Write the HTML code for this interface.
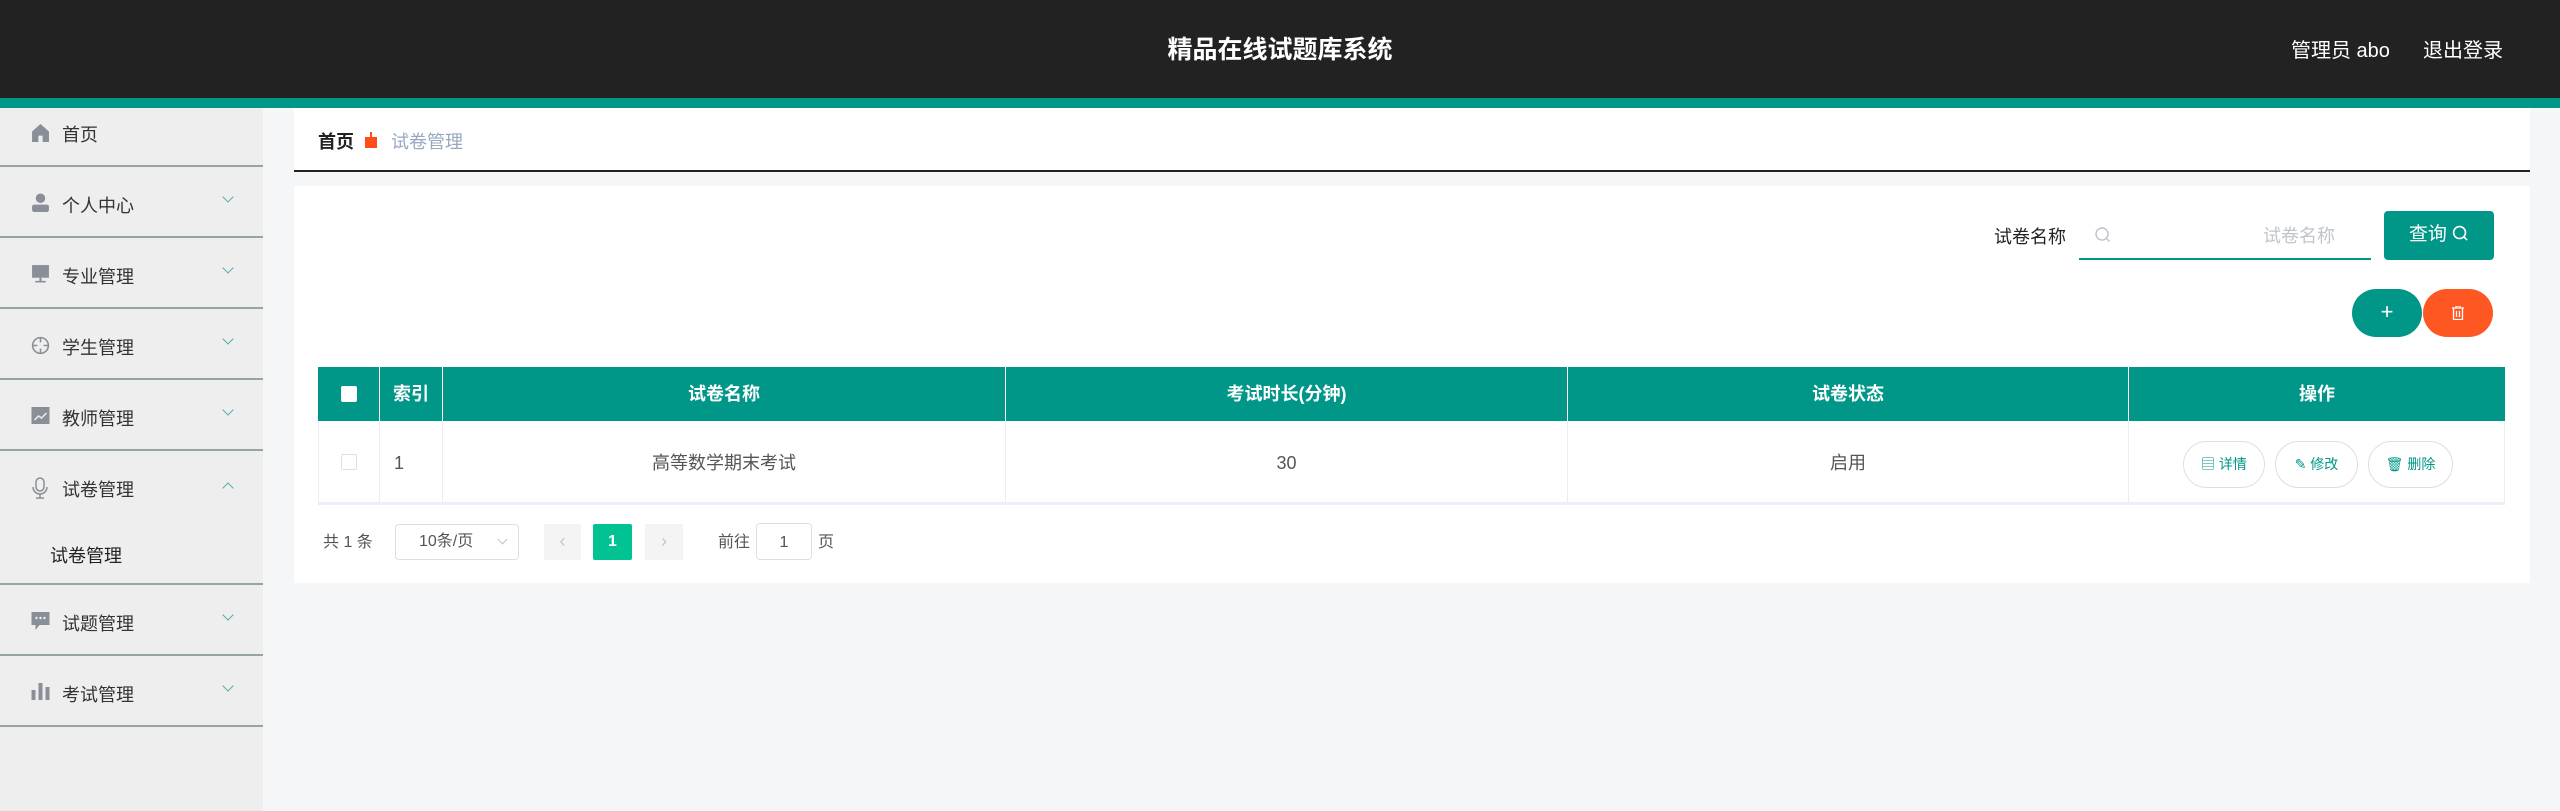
<!DOCTYPE html>
<html><head><meta charset="utf-8"><style>
*{margin:0;padding:0;box-sizing:border-box}
body{width:2560px;height:811px;overflow:hidden;background:#f5f6f8;font-family:"Liberation Sans","Noto Sans CJK SC",sans-serif;position:relative}
.a{position:absolute}
.hdr{left:0;top:0;width:2560px;height:98px;background:#222}
.bar{left:0;top:98px;width:2560px;height:10px;background:#009688}
.side{left:0;top:108px;width:263px;height:703px;background:#eee}
.item{position:absolute;left:0;width:263px;border-bottom:2px solid #97a5a2;font-size:18px;color:#333}
.item span.t{position:absolute;left:62px}
.item .ic{position:absolute;left:31px}
.item .ar{position:absolute;left:224px;width:8px;height:8px;border-right:1px solid #5aa;border-bottom:1px solid #5aa;transform:rotate(45deg)}
.c{text-align:center;color:#fff;font-weight:bold;font-size:18px}
.th{position:absolute;top:367px;height:54px;line-height:54px;background:#009688;border-right:1px solid #fff}
.td{position:absolute;top:421px;height:84px;line-height:84px;background:#fff;border-right:1px solid #ebeef5;border-bottom:3px solid #ebeef5;font-size:18px;color:#555;text-align:center}
.ob{position:absolute;top:441px;height:47px;border:1px solid #dcdfe6;border-radius:24px;background:#fff;color:#009688;font-size:14px;line-height:45px;text-align:center}
</style></head><body>
<div class="a hdr"></div>
<div class="a" style="left:0;top:30px;width:2560px;text-align:center;color:#fff;font-size:25px;font-weight:bold">精品在线试题库系统</div>
<div class="a" style="left:2291px;top:34px;color:#fff;font-size:20px">管理员 abo</div>
<div class="a" style="left:2423px;top:34px;color:#fff;font-size:20px">退出登录</div>
<div class="a bar"></div>
<div class="a side"></div>
<div class="item" style="top:108px;height:59px"><svg class="ic" style="top:15px" width="19" height="19" viewBox="0 0 18 18"><path d="M9 1L1 8v10h6v-6h4v6h6V8z" fill="#8a8e96"/></svg><span class="t" style="top:13px">首页</span></div>
<div class="item" style="top:167px;height:71px"><svg class="ic" style="top:26px" width="19" height="19" viewBox="0 0 18 18"><circle cx="9" cy="5" r="4.5" fill="#8a8e96"/><rect x="1" y="11" width="16" height="7" rx="2" fill="#8a8e96"/></svg><span class="t" style="top:25px">个人中心</span><i class="ar" style="top:26px"></i></div>
<div class="item" style="top:238px;height:71px"><svg class="ic" style="top:26px" width="19" height="19" viewBox="0 0 18 18"><rect x="1" y="1" width="16" height="12" fill="#8a8e96"/><rect x="8" y="13" width="2" height="4" fill="#8a8e96"/><rect x="4" y="16" width="10" height="1.5" fill="#8a8e96"/></svg><span class="t" style="top:25px">专业管理</span><i class="ar" style="top:26px"></i></div>
<div class="item" style="top:309px;height:71px"><svg class="ic" style="top:26px" width="19" height="21" viewBox="0 0 18 20"><circle cx="9" cy="10" r="7.5" fill="none" stroke="#8a8e96" stroke-width="1.5"/><path d="M9 2v5M9 13v5M1 10h5M12 10h5" stroke="#8a8e96" stroke-width="1.5"/></svg><span class="t" style="top:25px">学生管理</span><i class="ar" style="top:26px"></i></div>
<div class="item" style="top:380px;height:71px"><svg class="ic" style="top:27px" width="19" height="18" viewBox="0 0 18 18"><rect width="18" height="17" fill="#8a8e96"/><path d="M3 13l4-4 3 2 5-5" stroke="#eee" stroke-width="1.5" fill="none"/></svg><span class="t" style="top:25px">教师管理</span><i class="ar" style="top:26px"></i></div>
<div class="item" style="top:451px;height:134px"><svg class="ic" style="top:26px" width="18" height="22" viewBox="0 0 18 22"><rect x="5" y="1" width="8" height="13" rx="4" fill="none" stroke="#8a8e96" stroke-width="1.5"/><path d="M2 10a7 7 0 0 0 14 0M9 17v4M5 21h8" fill="none" stroke="#8a8e96" stroke-width="1.5"/></svg><span class="t" style="top:25px">试卷管理</span><i class="ar" style="top:33px;transform:rotate(225deg)"></i><span class="t" style="top:91px;left:50px;color:#222">试卷管理</span></div>
<div class="item" style="top:585px;height:71px"><svg class="ic" style="top:27px" width="19" height="19" viewBox="0 0 18 19"><path d="M0 0h18v13H8l-4 5v-5H0z" fill="#8a8e96"/><circle cx="5" cy="6" r="1.2" fill="#eee"/><circle cx="9" cy="6" r="1.2" fill="#eee"/><circle cx="13" cy="6" r="1.2" fill="#eee"/></svg><span class="t" style="top:25px">试题管理</span><i class="ar" style="top:26px"></i></div>
<div class="item" style="top:656px;height:71px"><svg class="ic" style="top:26px" width="19" height="18" viewBox="0 0 18 18"><rect x="0" y="8" width="4" height="10" fill="#8a8e96"/><rect x="7" y="1" width="4" height="17" fill="#8a8e96"/><rect x="14" y="5" width="4" height="13" fill="#8a8e96"/></svg><span class="t" style="top:25px">考试管理</span><i class="ar" style="top:26px"></i></div>

<div class="a" style="left:294px;top:108px;width:2236px;height:64px;background:#fff;border-bottom:2px solid #222"></div>
<div class="a" style="left:318px;top:128px;font-size:18px;font-weight:bold;color:#222">首页</div>
<svg class="a" style="left:364px;top:132px" width="14" height="16" viewBox="0 0 14 16"><rect x="1" y="5" width="12" height="11" fill="#ff4d1a"/><rect x="6" y="0" width="2" height="6" fill="#ff4d1a"/></svg>
<div class="a" style="left:391px;top:128px;font-size:18px;color:#97a8be">试卷管理</div>

<div class="a" style="left:294px;top:186px;width:2236px;height:397px;background:#fff"></div>
<div class="a" style="left:1994px;top:223px;font-size:18px;color:#222">试卷名称</div>
<div class="a" style="left:2079px;top:210px;width:292px;height:50px;border-bottom:2px solid #009688"></div>
<svg class="a" style="left:2094px;top:226px" width="18" height="18" viewBox="0 0 18 18"><circle cx="8" cy="8" r="6" fill="none" stroke="#c0c4cc" stroke-width="1.5"/><path d="M12.5 12.5l3 3" stroke="#c0c4cc" stroke-width="1.5"/></svg>
<div class="a" style="left:2263px;top:222px;font-size:18px;color:#c0c4cc">试卷名称</div>
<div class="a" style="left:2384px;top:211px;width:110px;height:49px;background:#009688;border-radius:4px;color:#fff;font-size:19px;line-height:47px;text-align:center">查询 <svg width="17" height="17" viewBox="0 0 18 18" style="vertical-align:-2px"><circle cx="8" cy="8" r="6.3" fill="none" stroke="#fff" stroke-width="1.7"/><path d="M12.5 12.5l3.5 3.5" stroke="#fff" stroke-width="1.7"/></svg></div>
<div class="a" style="left:2352px;top:289px;width:70px;height:48px;background:#009688;border-radius:24px;color:#fff;font-size:22px;line-height:46px;text-align:center">+</div>
<div class="a" style="left:2423px;top:289px;width:70px;height:48px;background:#ff5722;border-radius:24px"><svg style="position:absolute;left:29px;top:17px" width="12" height="14" viewBox="0 0 12 14"><path d="M0 2h12M4 2V0h4v2M1.5 2v11.5h9V2M4.5 5v6M7.5 5v6" fill="none" stroke="#fff" stroke-width="1.3"/></svg></div>

<div class="th" style="left:318px;width:62px"><div style="position:absolute;left:23px;top:19px;width:16px;height:16px;background:#fff;border-radius:2px"></div></div>
<div class="th c" style="left:380px;width:63px">索引</div>
<div class="th c" style="left:443px;width:563px">试卷名称</div>
<div class="th c" style="left:1006px;width:562px">考试时长(分钟)</div>
<div class="th c" style="left:1568px;width:561px">试卷状态</div>
<div class="th c" style="left:2129px;width:376px;border-right:none">操作</div>

<div class="td" style="left:318px;width:62px;border-left:1px solid #ebeef5"><div style="position:absolute;left:22px;top:33px;width:16px;height:16px;border:1px solid #dcdfe6;border-radius:2px"></div></div>
<div class="td" style="left:380px;width:63px;text-align:left;padding-left:14px">1</div>
<div class="td" style="left:443px;width:563px">高等数学期末考试</div>
<div class="td" style="left:1006px;width:562px">30</div>
<div class="td" style="left:1568px;width:561px">启用</div>
<div class="td" style="left:2129px;width:376px"></div>
<div class="ob" style="left:2183px;width:82px">▤ 详情</div>
<div class="ob" style="left:2275px;width:83px">✎ 修改</div>
<div class="ob" style="left:2368px;width:85px">🗑 删除</div>

<div class="a" style="left:323px;top:528px;font-size:16px;color:#555">共 1 条</div>
<div class="a" style="left:395px;top:524px;width:124px;height:36px;border:1px solid #dcdfe6;border-radius:4px;font-size:16px;color:#555;line-height:34px;padding-left:23px">10条/页<i style="position:absolute;left:103px;top:11px;width:7px;height:7px;border-right:1px solid #c0c4cc;border-bottom:1px solid #c0c4cc;transform:rotate(45deg)"></i></div>
<div class="a" style="left:544px;top:524px;width:37px;height:36px;background:#f4f4f5;color:#c0c4cc;text-align:center;line-height:34px;font-size:18px">‹</div>
<div class="a" style="left:593px;top:524px;width:39px;height:36px;background:#00c292;color:#fff;text-align:center;line-height:36px;font-size:16px;font-weight:bold;border-radius:2px">1</div>
<div class="a" style="left:645px;top:524px;width:38px;height:36px;background:#f4f4f5;color:#c0c4cc;text-align:center;line-height:34px;font-size:18px">›</div>
<div class="a" style="left:718px;top:528px;font-size:16px;color:#555">前往</div>
<div class="a" style="left:756px;top:523px;width:56px;height:37px;border:1px solid #dcdfe6;border-radius:4px;text-align:center;line-height:37px;font-size:16px;color:#555">1</div>
<div class="a" style="left:818px;top:528px;font-size:16px;color:#555">页</div>
</body></html>
